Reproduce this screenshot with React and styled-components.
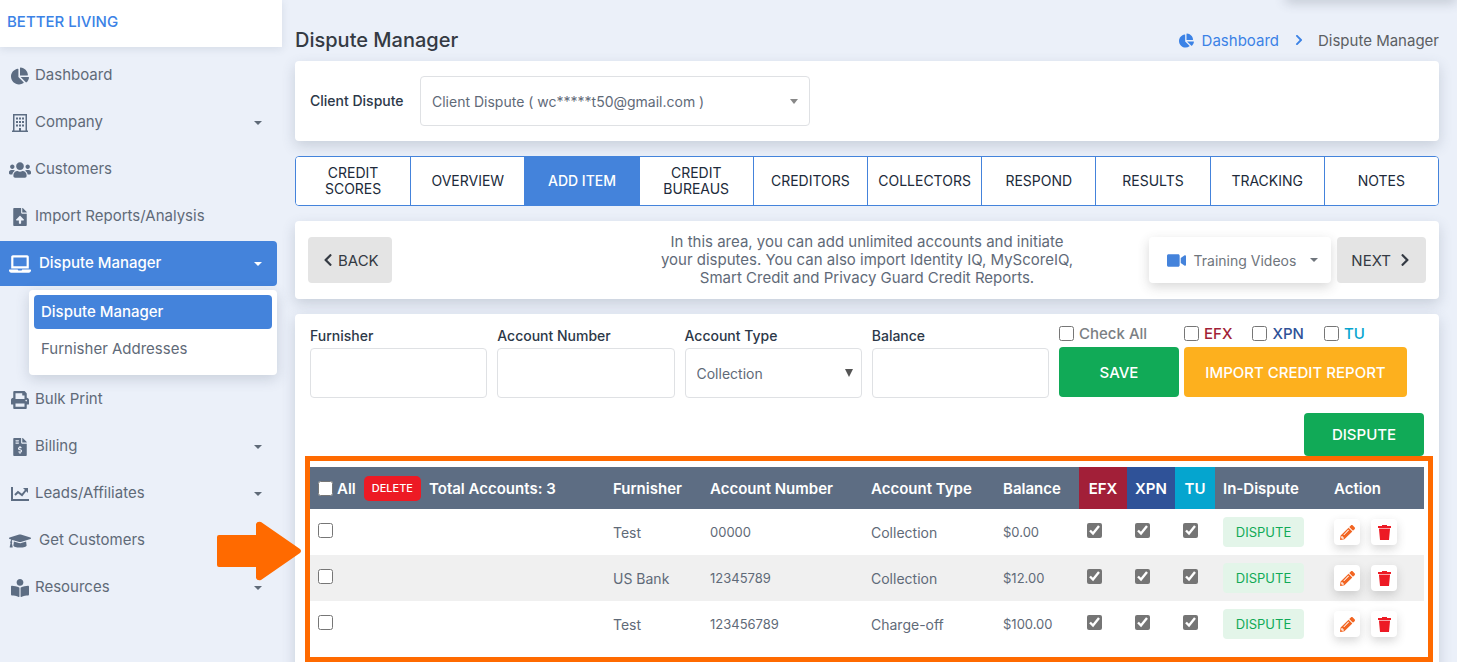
import React, { useState } from 'react'
import styled, { createGlobalStyle, css } from 'styled-components'
import {
    FaChartPie, FaUsers, FaFileUpload, FaLaptop, FaPrint, FaFileInvoiceDollar,
    FaGraduationCap, FaBookReader, FaChevronLeft, FaChevronRight, FaVideo, FaPencilAlt
} from 'react-icons/fa'

const colors = {
    page: '#ebf0f9',
    blue: '#4483db',
    link: '#3b82e6',
    slate: '#5d6d83',
    text: '#5f6a78',
    dark: '#2c3848',
    border: '#dfe1e4',
    green: '#11aa57',
    amber: '#fdb01e',
    red: '#ed1a24',
    orange: '#ff6a00',
    efx: '#a21f38',
    xpn: '#2f5298',
    tu: '#05a5cf',
}

const GlobalStyle = createGlobalStyle`
* {
    box-sizing:border-box;
}
body {
    margin:0;
    background:${colors.page};
    color:${colors.text};
    font-family:Inter, "Liberation Sans", sans-serif;
    font-size:14px;
    overflow:hidden;
}
button, input, select {
    font-family:inherit;
    font-size:inherit;
    color:inherit;
}
button {
    cursor:pointer;
}
a {
    color:inherit;
    text-decoration:none;
}
`

const Page = styled.div`
display:flex;
align-items:flex-start;
height:100vh;
overflow:hidden;
`
const Sidebar = styled.aside`
flex:0 0 282px;
`
const Brand = styled.div`
height:47px;
padding:13px 7px;
background:#ffffff;
color:${colors.link};
font-size:15px;
line-height:18px;
font-weight:500;
box-shadow:0 2px 8px rgba(60, 75, 100, 0.12);
`
const Nav = styled.nav`
display:flex;
flex-direction:column;
gap:2px;
padding:6px 5px 0 0;
`
const NavLink = styled.a`
display:flex;
align-items:center;
height:45px;
padding:0 15px 0 9px;
border-radius:0 4px 4px 0;
font-size:15px;
color:${colors.text};
${({ $active }) => $active && css`
    background:${colors.blue};
    color:#ffffff;
    font-weight:500;
`}
`
const NavIcon = styled.span`
display:flex;
justify-content:center;
flex:0 0 22px;
margin-right:${({ $wide }) => $wide ? '8px' : '4px'};
font-size:${({ $wide }) => $wide ? '22px' : '18px'};
color:${({ $active }) => $active ? '#ffffff' : colors.slate};
`
const NavText = styled.span`
flex:1;
line-height:20px;
padding-bottom:1px;
`
const Caret = styled.span`
border:4px solid transparent;
border-top-color:currentColor;
border-bottom:0;
`
const SubMenu = styled.div`
display:flex;
flex-direction:column;
gap:3px;
margin:2px 0 0 29px;
padding:5px 5px 9px;
background:#ffffff;
border-radius:4px;
box-shadow:0 4px 14px rgba(60, 75, 100, 0.2);
`
const SubLink = styled.a`
padding:0 7px;
border-radius:4px;
line-height:34px;
font-size:15px;
${({ $active }) => $active && css`
    background:${colors.blue};
    color:#ffffff;
    font-weight:500;
`}
`
const Main = styled.main`
flex:1;
min-width:0;
display:flex;
flex-direction:column;
gap:15px;
padding:0 18px 0 13px;
position:relative;
`
const TopShade = styled.div`
position:absolute;
top:-8px;
right:0;
width:172px;
height:8px;
border-radius:8px;
box-shadow:0 2px 12px rgba(60, 70, 90, 0.3);
`
const TitleRow = styled.header`
display:flex;
justify-content:space-between;
align-items:center;
height:46px;
padding-top:34px;
`
const Title = styled.h1`
margin:0;
font-size:20px;
line-height:22px;
font-weight:500;
color:#343a43;
`
const Crumbs = styled.nav`
display:flex;
align-items:center;
font-size:15px;
color:#5c5f63;
`
const CrumbLink = styled.a`
display:flex;
align-items:center;
gap:8px;
color:${colors.link};
`
const CrumbArrow = styled(FaChevronRight)`
margin:0 13px 0 14px;
font-size:12px;
color:${colors.link};
`
const Card = styled.section`
background:#ffffff;
border-radius:4px;
box-shadow:0 5px 14px rgba(60, 75, 100, 0.2);
`
const ClientCard = styled(Card)`
display:flex;
align-items:center;
padding:15px;
`
const Label = styled.label`
min-width:${({ $width }) => $width || '0'};
font-size:14px;
line-height:16px;
font-weight:500;
color:${colors.dark};
`
const SelectWrap = styled.div`
display:flex;
align-items:center;
position:relative;
width:${({ $width }) => $width || 'auto'};
`
const SelectMark = styled.span`
position:absolute;
right:${({ $large }) => $large ? '9px' : '12px'};
border:4px solid transparent;
border-top:${({ $large }) => $large ? '8px' : '5px'} solid ${({ $large }) => $large ? '#555' : '#888'};
border-bottom:0;
pointer-events:none;
`
const field = css`
width:100%;
height:50px;
padding:0 11px;
background:#ffffff;
border:1px solid ${colors.border};
border-radius:4px;
font-size:14px;
`
const Input = styled.input`
${field}
`
const Select = styled.select`
${field}
appearance:none;
`
const Tabs = styled.div`
display:grid;
grid-template-columns:repeat(10, 1fr);
border:1px solid ${colors.blue};
border-radius:4px;
overflow:hidden;
background:#ffffff;
`
const Tab = styled.button`
height:48px;
padding:0 5px;
border:0;
border-left:${({ $first }) => $first ? '0' : `1px solid ${colors.blue}`};
background:${({ $active }) => $active ? colors.blue : '#ffffff'};
color:${({ $active }) => $active ? '#ffffff' : '#202a3a'};
font-size:14px;
line-height:16px;
font-weight:${({ $active }) => $active ? 500 : 400};
`
const StepCard = styled(Card)`
display:flex;
justify-content:space-between;
align-items:center;
padding:12px 13px;
`
const StepSide = styled.div`
flex:1;
display:flex;
gap:6px;
justify-content:${({ $end }) => $end ? 'flex-end' : 'flex-start'};
`
const StepText = styled.p`
margin:0;
flex:0 0 424px;
font-size:15px;
line-height:18px;
text-align:center;
`
const GreyButton = styled.button`
display:flex;
align-items:center;
gap:${({ $gap }) => $gap || '3px'};
height:46px;
padding:${({ $gap }) => $gap ? '0 14px' : '0 13px'};
border:0;
border-radius:4px;
background:#e4e4e4;
color:#343a43;
font-size:15px;
`
const VideoButton = styled.button`
display:flex;
align-items:center;
gap:8px;
height:46px;
padding:0 13px 0 18px;
border:0;
border-radius:4px;
background:#ffffff;
color:#6f757c;
font-size:14px;
box-shadow:0 4px 12px rgba(60, 60, 60, 0.2);
`
const VideoText = styled.span`
padding-right:6px;
`
const ItemCard = styled(Card)`
padding:11px 15px 30px;
`
const ItemForm = styled.form`
display:flex;
align-items:flex-end;
gap:10px;
`
const Field = styled.div`
flex:1;
min-width:0;
display:flex;
flex-direction:column;
gap:4px;
`
const Actions = styled.div`
flex:0 0 365px;
display:flex;
gap:5px;
`
const ActionColumn = styled.div`
display:flex;
flex-direction:column;
gap:5px;
padding-bottom:1px;
`
const Checks = styled.div`
display:flex;
gap:20px;
`
const CheckLabel = styled.label`
display:flex;
align-items:center;
gap:5px;
font-size:15px;
line-height:17px;
font-weight:500;
color:${({ $color }) => $color || '#7b7f84'};
`
const Checkbox = styled.input`
width:15px;
height:15px;
margin:0;
accent-color:#757575;
`
const Button = styled.button`
height:${({ $height }) => $height || '50px'};
min-width:${({ $width }) => $width || '120px'};
padding:0 17px;
border:0;
border-radius:4px;
background:${({ $color }) => $color};
color:#ffffff;
font-size:15px;
font-weight:500;
`
const DisputeRow = styled.div`
display:flex;
justify-content:flex-end;
margin-top:15px;
`
const Highlight = styled.div`
position:relative;
margin:0 -9px 0 -5px;
padding:6px 4px 10px 0;
border:5px solid ${colors.orange};
background:#ffffff;
`
const Arrow = styled.svg`
position:absolute;
top:60px;
left:-93px;
width:84px;
height:60px;
`
const Table = styled.table`
width:100%;
table-layout:fixed;
border-collapse:collapse;
font-size:14px;
`
const Col = styled.col`
width:${({ $width }) => $width || 'auto'};
`
const Th = styled.th`
height:42px;
padding:0 0 0 8px;
background:${({ $color }) => $color || colors.slate};
color:#ffffff;
font-size:15px;
font-weight:600;
text-align:${({ $color }) => $color ? 'center' : 'left'};
${({ $color }) => $color && 'padding:0;'}
`
const Row = styled.tr`
height:46px;
background:${({ $odd }) => $odd ? '#f0f0f0' : '#ffffff'};
`
const Td = styled.td`
padding:0 0 0 8px;
font-size:${({ $numeric }) => $numeric ? '13px' : '14px'};
`
const AllCell = styled.div`
display:flex;
align-items:center;
gap:8px;
`
const AllLabel = styled.label`
display:flex;
align-items:center;
gap:4px;
`
const DeleteButton = styled.button`
height:25px;
padding:0 8px;
border:0;
border-radius:5px;
background:${colors.red};
color:#ffffff;
font-size:11px;
font-weight:500;
`
const DisputeTag = styled.button`
width:81px;
height:30px;
padding:0;
border:0;
border-radius:4px;
background:#e3f5e9;
color:${colors.green};
font-size:13px;
`
const IconGroup = styled.div`
display:flex;
gap:11px;
`
const IconButton = styled.button`
display:flex;
justify-content:center;
align-items:center;
width:26px;
height:26px;
padding:0;
border:0;
border-radius:4px;
background:#ffffff;
color:${({ $color }) => $color};
font-size:15px;
box-shadow:0 4px 10px rgba(60, 60, 60, 0.2);
`

const BuildingIcon = () => (
    <svg width="16" height="18" viewBox="0 0 16 18" fill="currentColor">
        <path fillRule="evenodd" d="M1 0h14v16.500h1V18H0v-1.500h1zM2.500 1.500v15H7V14h2v2.500h4.500v-15z" />
        <path d="M4 3.500h2v2H4zM7 3.500h2v2H7zM10 3.500h2v2h-2zM4 7h2v2H4zM7 7h2v2H7zM10 7h2v2h-2zM4 10.500h2v2H4zM7 10.500h2v2H7zM10 10.500h2v2h-2z" />
    </svg>
)

const TrendIcon = () => (
    <svg width="18" height="14" viewBox="0 0 18 14" fill="none" stroke="currentColor" strokeWidth="2">
        <path d="M1 0v13h17" />
        <path d="M4 8l3-3 4 3 4-5" />
        <path d="M12 1h5v5z" fill="currentColor" stroke="none" />
    </svg>
)

const TrashIcon = () => (
    <svg width="13" height="15" viewBox="0 0 13 15" fill="currentColor">
        <path d="M4 0h5v1h4v2H0V1h4z" />
        <path d="M1 3h11v1H1z" opacity="0.4" />
        <path d="M1 4h11l-1 11H2z" />
    </svg>
)

const navItems = [
    { label: 'Dashboard', icon: <FaChartPie /> },
    { label: 'Company', icon: <BuildingIcon />, caret: true },
    { label: 'Customers', icon: <FaUsers size={ 22 } /> },
    { label: 'Import Reports/Analysis', icon: <FaFileUpload /> },
    { label: 'Dispute Manager', icon: <FaLaptop />, caret: true, wide: true, active: true },
    { label: 'Bulk Print', icon: <FaPrint /> },
    { label: 'Billing', icon: <FaFileInvoiceDollar />, caret: true },
    { label: 'Leads/Affiliates', icon: <TrendIcon />, caret: true },
    { label: 'Get Customers', icon: <FaGraduationCap />, wide: true },
    { label: 'Resources', icon: <FaBookReader />, caret: true },
]

const tabs = [
    'CREDIT SCORES', 'OVERVIEW', 'ADD ITEM', 'CREDIT BUREAUS', 'CREDITORS',
    'COLLECTORS', 'RESPOND', 'RESULTS', 'TRACKING', 'NOTES',
]

const accounts = [
    { id: 1, furnisher: 'Test', number: '00000', type: 'Collection', balance: '$0.00' },
    { id: 2, furnisher: 'US Bank', number: '12345789', type: 'Collection', balance: '$12.00' },
    { id: 3, furnisher: 'Test', number: '123456789', type: 'Charge-off', balance: '$100.00' },
]

const bureaus = [
    { name: 'EFX', color: colors.efx },
    { name: 'XPN', color: colors.xpn },
    { name: 'TU', color: colors.tu },
]

const SideNav = () => (
    <Sidebar>
        <Brand>BETTER LIVING</Brand>
        <Nav>
            { navItems.map(({ label, icon, caret, wide, active }) => (
                <React.Fragment key={ label }>
                    <NavLink href="#" $active={ active }>
                        <NavIcon $wide={ wide } $active={ active }>{ icon }</NavIcon>
                        <NavText>{ label }</NavText>
                        { caret && <Caret /> }
                    </NavLink>
                    { active && (
                        <SubMenu>
                            <SubLink href="#" $active>Dispute Manager</SubLink>
                            <SubLink href="#">Furnisher Addresses</SubLink>
                        </SubMenu>
                    ) }
                </React.Fragment>
            )) }
        </Nav>
    </Sidebar>
)

const AccountsTable = () => (
    <Table>
        <colgroup>
            <Col />
            <Col $width="97px" />
            <Col $width="161px" />
            <Col $width="132px" />
            <Col $width="84px" />
            <Col $width="48px" />
            <Col $width="48px" />
            <Col $width="40px" />
            <Col $width="111px" />
            <Col $width="98px" />
        </colgroup>
        <thead>
            <tr>
                <Th>
                    <AllCell>
                        <AllLabel><Checkbox type="checkbox" />All</AllLabel>
                        <DeleteButton type="button">DELETE</DeleteButton>
                        Total Accounts: 3
                    </AllCell>
                </Th>
                <Th>Furnisher</Th>
                <Th>Account Number</Th>
                <Th>Account Type</Th>
                <Th>Balance</Th>
                { bureaus.map(({ name, color }) => <Th key={ name } $color={ color }>{ name }</Th>) }
                <Th>In-Dispute</Th>
                <Th>Action</Th>
            </tr>
        </thead>
        <tbody>
            { accounts.map(({ id, furnisher, number, type, balance }, index) => (
                <Row key={ id } $odd={ index % 2 === 1 }>
                    <Td><Checkbox type="checkbox" aria-label={ `Select ${furnisher}` } /></Td>
                    <Td>{ furnisher }</Td>
                    <Td $numeric>{ number }</Td>
                    <Td>{ type }</Td>
                    <Td $numeric>{ balance }</Td>
                    { bureaus.map(({ name }) => (
                        <Td key={ name }><Checkbox type="checkbox" defaultChecked aria-label={ name } /></Td>
                    )) }
                    <Td><DisputeTag type="button">DISPUTE</DisputeTag></Td>
                    <Td>
                        <IconGroup>
                            <IconButton $color="#f26522" aria-label="Edit"><FaPencilAlt /></IconButton>
                            <IconButton $color={ colors.red } aria-label="Delete"><TrashIcon /></IconButton>
                        </IconGroup>
                    </Td>
                </Row>
            )) }
        </tbody>
    </Table>
)

const App = () => {

    const [activeTab, setActiveTab] = useState('ADD ITEM')

    return (
        <>
            <GlobalStyle />
            <Page>
                <SideNav />
                <Main>
                    <TopShade />
                    <TitleRow>
                        <Title>Dispute Manager</Title>
                        <Crumbs>
                            <CrumbLink href="#"><FaChartPie />Dashboard</CrumbLink>
                            <CrumbArrow />
                            Dispute Manager
                        </Crumbs>
                    </TitleRow>

                    <ClientCard>
                        <Label htmlFor="client" $width="110px">Client Dispute</Label>
                        <SelectWrap $width="390px">
                            <Select id="client"><option>Client Dispute ( wc*****t50@gmail.com )</option></Select>
                            <SelectMark />
                        </SelectWrap>
                    </ClientCard>

                    <Tabs>
                        { tabs.map((tab, index) => (
                            <Tab
                                key={ tab }
                                $first={ index === 0 }
                                $active={ tab === activeTab }
                                onClick={ () => setActiveTab(tab) }
                            >
                                { tab }
                            </Tab>
                        )) }
                    </Tabs>

                    <StepCard>
                        <StepSide>
                            <GreyButton><FaChevronLeft size={ 14 } />BACK</GreyButton>
                        </StepSide>
                        <StepText>
                            In this area, you can add unlimited accounts and initiate
                            your disputes. You can also import Identity IQ, MyScoreIQ,
                            Smart Credit and Privacy Guard Credit Reports.
                        </StepText>
                        <StepSide $end>
                            <VideoButton>
                                <FaVideo size={ 19 } color={ colors.blue } />
                                <VideoText>Training Videos</VideoText>
                                <Caret />
                            </VideoButton>
                            <GreyButton $gap="7px">NEXT<FaChevronRight size={ 14 } /></GreyButton>
                        </StepSide>
                    </StepCard>

                    <ItemCard>
                        <ItemForm>
                            <Field>
                                <Label htmlFor="furnisher">Furnisher</Label>
                                <Input id="furnisher" />
                            </Field>
                            <Field>
                                <Label htmlFor="number">Account Number</Label>
                                <Input id="number" />
                            </Field>
                            <Field>
                                <Label htmlFor="type">Account Type</Label>
                                <SelectWrap>
                                    <Select id="type"><option>Collection</option></Select>
                                    <SelectMark $large />
                                </SelectWrap>
                            </Field>
                            <Field>
                                <Label htmlFor="balance">Balance</Label>
                                <Input id="balance" />
                            </Field>
                            <Actions>
                                <ActionColumn>
                                    <CheckLabel><Checkbox type="checkbox" />Check All</CheckLabel>
                                    <Button type="button" $color={ colors.green }>SAVE</Button>
                                </ActionColumn>
                                <ActionColumn>
                                    <Checks>
                                        { bureaus.map(({ name, color }) => (
                                            <CheckLabel key={ name } $color={ color }>
                                                <Checkbox type="checkbox" />{ name }
                                            </CheckLabel>
                                        )) }
                                    </Checks>
                                    <Button type="button" $color={ colors.amber } $width="223px">IMPORT CREDIT REPORT</Button>
                                </ActionColumn>
                            </Actions>
                        </ItemForm>
                        <DisputeRow>
                            <Button type="button" $color={ colors.green } $height="43px">DISPUTE</Button>
                        </DisputeRow>
                        <Highlight>
                            <Arrow viewBox="0 0 84 60" fill={ colors.orange }>
                                <path d="M2 14H39V3Q40 0 44 1L83 28Q85 30 83 32L44 59Q40 60 39 57V46H2Q0 46 0 44V16Q0 14 2 14Z" />
                            </Arrow>
                            <AccountsTable />
                        </Highlight>
                    </ItemCard>
                </Main>
            </Page>
        </>
    )
}

export default App
